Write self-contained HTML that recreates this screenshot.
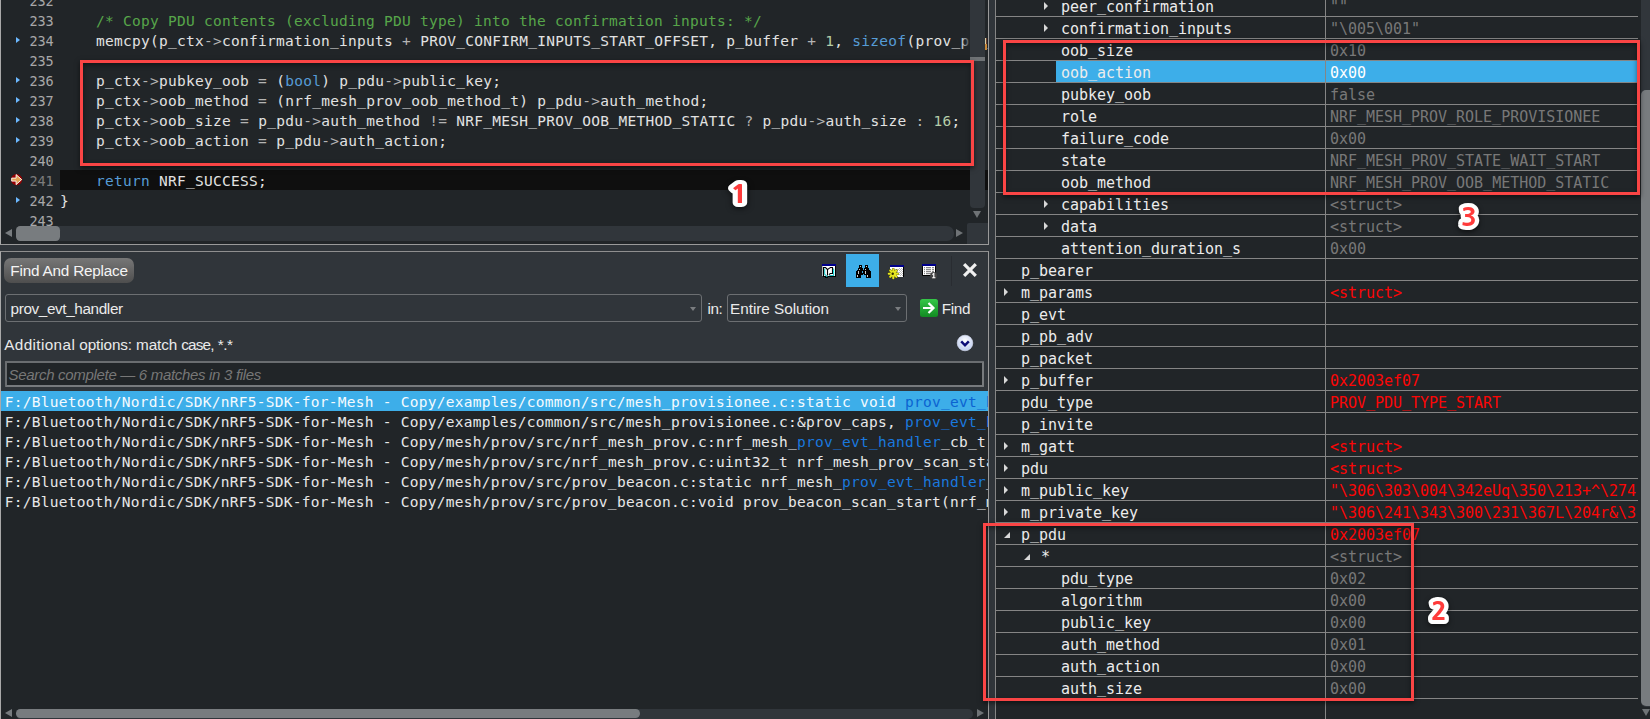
<!DOCTYPE html><html><head><meta charset="utf-8"><title>Find And Replace</title><style>
*{box-sizing:border-box;margin:0;padding:0}
html,body{width:1650px;height:719px;overflow:hidden;background:#30353a;}
body{position:relative;font-family:"Liberation Sans","DejaVu Sans",sans-serif;color:#e6e6e6;}
.abs{position:absolute}
.mono{font-family:"DejaVu Sans Mono","Liberation Mono",monospace;font-size:14.5px;letter-spacing:0.271px;white-space:pre}
#ed{left:0;top:0;width:989px;height:245px;background:#212528;border-left:1px solid #a9a9a9;border-right:1px solid #9a9a9a;border-bottom:1px solid #9a9a9a;overflow:hidden}
.ln{position:absolute;left:0;height:20px;line-height:20px;width:970px}
.ln .no{position:absolute;left:28.4px;top:1px;color:#a8a8a8;font-size:13.5px;letter-spacing:-0.13px}
.ln .cd{position:absolute;left:59px;top:1px;color:#e2e2e2}
u{text-decoration:none;position:relative;top:-1px} .cm{color:#57a64a} .kw{color:#569cd6} .nu{color:#b5cea8} .op{color:#b4b4b4}
.tri{position:absolute;left:14.6px;top:6.8px;width:0;height:0;border-left:4px solid #6cb8ff;border-top:3.1px solid transparent;border-bottom:3.1px solid transparent}
.box{position:absolute;border:3px solid #fa4545;box-shadow:0 2px 5px rgba(0,0,0,.55), inset 0 2px 5px rgba(0,0,0,.45);pointer-events:none}
#fp{left:0;top:251px;width:989px;height:468px;background:#30353a;border-left:1px solid #a9a9a9;border-top:1px solid #8f8f8f;border-right:1px solid #9a9a9a;overflow:hidden}
.ui{font-size:15px;color:#eaeaea;white-space:pre}
.res{position:absolute;left:0;width:987px;height:20px;line-height:22px;color:#e8e8e8;padding-left:3.8px;overflow:hidden}
.hl{color:#1a78de} .hs{color:#0b63d1}
#wt{left:995px;top:0;width:655px;height:719px;background:#212528;border-left:1px solid #858585;overflow:hidden}
.row{position:absolute;left:0;width:642px;height:22px;border-bottom:1px solid #858585;font-size:15px;letter-spacing:-0.03px}
.row .nm{position:absolute;top:1px;line-height:22px;color:#ececec}
.row .vl{position:absolute;left:334px;top:1px;line-height:22px;}
.ar{position:absolute;top:6.8px;width:0;height:0;border-left:4.7px solid #d8d8d8;border-top:4.4px solid transparent;border-bottom:4.4px solid transparent}
.ax{position:absolute;top:9px;width:0;height:0;border-bottom:6px solid #d8d8d8;border-left:6px solid transparent}
</style></head><body>
<div id="ed" class="abs">
<div class="abs" style="left:59px;top:170px;width:929px;height:20px;background:#0f0f0f"></div>
<div class="ln mono" style="top:-10px"><span class="no">232</span><span class="cd"></span></div>
<div class="ln mono" style="top:10px"><span class="no">233</span><span class="cd">    <span class="cm">/* Copy PDU contents (excluding PDU type) into the confirmation inputs: */</span></span></div>
<div class="ln mono" style="top:30px"><i class="tri"></i><span class="no">234</span><span class="cd">    memcpy(p<u>_</u>ctx<span class="op">-&gt;</span>confirmation<u>_</u>inputs <span class="op">+</span> PROV<u>_</u>CONFIRM<u>_</u>INPUTS<u>_</u>START<u>_</u>OFFSET, p<u>_</u>buffer <span class="op">+</span> <span class="nu">1</span>, <span class="kw">sizeof</span>(prov<u>_</u>pdu<u>_</u>prov<u>_</u>start<u>_</u>t) <span class="op">-</span> <span class="nu">1</span>);</span></div>
<div class="ln mono" style="top:50px"><span class="no">235</span><span class="cd"></span></div>
<div class="ln mono" style="top:70px"><i class="tri"></i><span class="no">236</span><span class="cd">    p<u>_</u>ctx<span class="op">-&gt;</span>pubkey<u>_</u>oob <span class="op">=</span> (<span class="kw">bool</span>) p<u>_</u>pdu<span class="op">-&gt;</span>public<u>_</u>key;</span></div>
<div class="ln mono" style="top:90px"><i class="tri"></i><span class="no">237</span><span class="cd">    p<u>_</u>ctx<span class="op">-&gt;</span>oob<u>_</u>method <span class="op">=</span> (nrf<u>_</u>mesh<u>_</u>prov<u>_</u>oob<u>_</u>method<u>_</u>t) p<u>_</u>pdu<span class="op">-&gt;</span>auth<u>_</u>method;</span></div>
<div class="ln mono" style="top:110px"><i class="tri"></i><span class="no">238</span><span class="cd">    p<u>_</u>ctx<span class="op">-&gt;</span>oob<u>_</u>size <span class="op">=</span> p<u>_</u>pdu<span class="op">-&gt;</span>auth<u>_</u>method <span class="op">!=</span> NRF<u>_</u>MESH<u>_</u>PROV<u>_</u>OOB<u>_</u>METHOD<u>_</u>STATIC <span class="op">?</span> p<u>_</u>pdu<span class="op">-&gt;</span>auth<u>_</u>size <span class="op">:</span> <span class="nu">16</span>;</span></div>
<div class="ln mono" style="top:130px"><i class="tri"></i><span class="no">239</span><span class="cd">    p<u>_</u>ctx<span class="op">-&gt;</span>oob<u>_</u>action <span class="op">=</span> p<u>_</u>pdu<span class="op">-&gt;</span>auth<u>_</u>action;</span></div>
<div class="ln mono" style="top:150px"><span class="no">240</span><span class="cd"></span></div>
<div class="ln mono" style="top:170px"><span class="no" style="color:#7c7c7c">241</span><span class="cd">    <span class="kw">return</span> NRF<u>_</u>SUCCESS;</span></div>
<div class="ln mono" style="top:190px"><i class="tri"></i><span class="no">242</span><span class="cd">}</span></div>
<div class="ln mono" style="top:210px"><span class="no">243</span><span class="cd"></span></div>
<svg class="abs" style="left:8px;top:172px" width="15" height="15" viewBox="0 0 15 15"><circle cx="7.6" cy="7.6" r="5.6" fill="#960000"/><path d="M2.7 6.1h4.4V2.6l5.6 5-5.6 5V9.1H2.7z" fill="#e2a253" stroke="#fff" stroke-width="0.9" stroke-linejoin="miter"/></svg>
<div class="abs" style="left:960px;top:30px;width:10px;height:20px;background:linear-gradient(90deg,rgba(33,37,40,0),#212528)"></div>
<div class="abs" style="left:969px;top:0;width:15px;height:208px;background:#31363b;border-radius:0 0 4px 4px"></div>
<div class="abs" style="left:969px;top:57px;width:15px;height:4px;background:#6f7376"></div>
<div class="abs" style="left:972px;top:211px;width:0;height:0;border-top:7px solid #6f7376;border-left:4.5px solid transparent;border-right:4.5px solid transparent"></div>
<div class="abs" style="left:15px;top:226px;width:938px;height:15px;background:#31363b;border-radius:5px 7px 7px 5px"></div>
<div class="abs" style="left:15px;top:226px;width:44px;height:15px;background:#787c7f;border-radius:4.2px"></div>
<div class="abs" style="left:4.3px;top:228.7px;width:0;height:0;border-right:7px solid #787c7f;border-top:4.5px solid transparent;border-bottom:4.5px solid transparent"></div>
<div class="abs" style="left:955px;top:228.7px;width:0;height:0;border-left:7px solid #6f7376;border-top:4.5px solid transparent;border-bottom:4.5px solid transparent"></div>
<div class="abs" style="left:966px;top:223px;width:22px;height:21px;background:#31363b;border-radius:2px 0 0 0"></div>
<div class="abs" style="left:984px;top:44px;width:2px;height:6px;background:#c98a3a"></div>
</div>
<div class="box" style="left:80px;top:60px;width:894px;height:106px"></div>
<div id="fp" class="abs">
<div class="abs ui" style="left:3px;top:6px;width:130px;height:25px;line-height:25px;border-radius:7px;background:linear-gradient(#777,#4e4e4e);padding-left:6.3px;font-size:15.3px;letter-spacing:-0.2px;color:#f4f4f4">Find And Replace</div>
<div class="abs" style="left:845px;top:2px;width:33px;height:33px;background:#3daee9"></div>
<div class="abs" style="left:950px;top:4px;width:1px;height:30px;background:#292c31"></div>
<svg class="abs" style="left:821px;top:12px" width="15" height="15" viewBox="0 0 15 15"><rect x="0" y="0" width="14" height="2" fill="#00008b"/><rect x="0" y="2" width="13" height="10" fill="#fff"/><rect x="0" y="2" width="1" height="10" fill="#c4c4c4"/><rect x="13" y="2" width="1" height="11" fill="#000"/><rect x="1" y="12" width="13" height="1" fill="#000"/><rect x="3" y="13" width="3" height="1" fill="#000"/><path d="M1.5 12V3.5h2l2 2v6" fill="none" stroke="#000" stroke-width="1.1"/><path d="M2.7 4.6v5.6l2.6 2.6" fill="none" stroke="#1fc4c4" stroke-width="1.1"/><path d="M5.5 5.6l1.6-1.2 1.4-0.9h2v6H8.3l-1.4 1.1" fill="none" stroke="#000" stroke-width="1.1"/><path d="M11.6 4.6v6.9H7.2" fill="none" stroke="#1fc4c4" stroke-width="1.1"/><circle cx="11.7" cy="6.6" r="0.6" fill="#0ff"/><circle cx="11.7" cy="8.6" r="0.6" fill="#0ff"/></svg>
<svg class="abs" style="left:855px;top:13px" width="15" height="13" viewBox="0 0 15 13"><rect x="3" y="0" width="3" height="1.05" fill="#000"/><rect x="9" y="0" width="3" height="1.05" fill="#000"/><rect x="3" y="1" width="3" height="1.05" fill="#000"/><rect x="9" y="1" width="3" height="1.05" fill="#000"/><rect x="3" y="2" width="3" height="1.05" fill="#000"/><rect x="9" y="2" width="3" height="1.05" fill="#000"/><rect x="2" y="3" width="5" height="1.05" fill="#000"/><rect x="8" y="3" width="5" height="1.05" fill="#000"/><rect x="2" y="4" width="5" height="1.05" fill="#000"/><rect x="8" y="4" width="5" height="1.05" fill="#000"/><rect x="1" y="5" width="13" height="1.05" fill="#000"/><rect x="0" y="6" width="6" height="1.05" fill="#000"/><rect x="7" y="6" width="8" height="1.05" fill="#000"/><rect x="0" y="7" width="6" height="1.05" fill="#000"/><rect x="7" y="7" width="8" height="1.05" fill="#000"/><rect x="0" y="8" width="15" height="1.05" fill="#000"/><rect x="0" y="9" width="7" height="1.05" fill="#000"/><rect x="8" y="9" width="7" height="1.05" fill="#000"/><rect x="0" y="10" width="5" height="1.05" fill="#000"/><rect x="10" y="10" width="5" height="1.05" fill="#000"/><rect x="0" y="11" width="5" height="1.05" fill="#000"/><rect x="10" y="11" width="5" height="1.05" fill="#000"/><rect x="0" y="12" width="5" height="1.05" fill="#000"/><rect x="10" y="12" width="5" height="1.05" fill="#000"/><rect x="4.15" y="1" width="0.8" height="1" fill="#fff"/><rect x="10.15" y="1" width="0.8" height="1" fill="#fff"/><rect x="3.15" y="4" width="0.8" height="1" fill="#fff"/><rect x="9.15" y="4" width="0.8" height="1" fill="#fff"/><rect x="2.15" y="6" width="0.8" height="1" fill="#fff"/><rect x="2.15" y="7" width="0.8" height="1" fill="#fff"/><rect x="2.15" y="8" width="0.8" height="1" fill="#fff"/><rect x="9.15" y="6" width="0.8" height="1" fill="#fff"/><rect x="9.15" y="7" width="0.8" height="1" fill="#fff"/><rect x="9.15" y="8" width="0.8" height="1" fill="#fff"/><rect x="1.15" y="10" width="0.8" height="1" fill="#fff"/><rect x="1.15" y="11" width="0.8" height="1" fill="#fff"/><rect x="11.15" y="10" width="0.8" height="1" fill="#fff"/><rect x="11.15" y="11" width="0.8" height="1" fill="#fff"/></svg>
<svg class="abs" style="left:886px;top:13px" width="18" height="15" viewBox="0 0 18 15"><rect x="3" y="0" width="14" height="2" fill="#00008b"/><rect x="3" y="2" width="13" height="10" fill="#fff"/><rect x="16" y="2" width="1" height="10" fill="#000"/><g fill="#bdbdbd"><rect x="12" y="3" width="1" height="1"/><rect x="14" y="3" width="1" height="1"/><rect x="11" y="4" width="1" height="1"/><rect x="13" y="4" width="1" height="1"/><rect x="15" y="4" width="1" height="1"/><rect x="12" y="5" width="1" height="1"/><rect x="14" y="5" width="1" height="1"/><rect x="13" y="6" width="1" height="1"/><rect x="15" y="6" width="1" height="1"/><rect x="12" y="7" width="1" height="1"/><rect x="14" y="7" width="1" height="1"/><rect x="13" y="8" width="1" height="1"/><rect x="15" y="8" width="1" height="1"/><rect x="12" y="9" width="1" height="1"/><rect x="14" y="9" width="1" height="1"/><rect x="13" y="10" width="1" height="1"/><rect x="15" y="10" width="1" height="1"/></g><g stroke="#3a3a00" stroke-width="2.6" stroke-linecap="round"><path d="M6.3 4.2v9M1.8 8.7h9M3.1 5.5l6.4 6.4M9.5 5.5L3.1 11.9"/></g><g stroke="#e6e620" stroke-width="2.1" stroke-linecap="round"><path d="M6.3 4.4v8.8M1.8 8.7h9M3.2 5.6l6.2 6.2M9.4 5.6L3.2 11.8"/></g><circle cx="5.7" cy="8.7" r="1.2" fill="#2a2a00"/></svg>
<svg class="abs" style="left:921px;top:12px" width="17" height="16" viewBox="0 0 17 16"><rect x="0" y="0" width="14" height="2" fill="#00008b"/><rect x="0" y="2" width="14" height="10" rx="1" fill="#000"/><rect x="1" y="2" width="12" height="9" fill="#fff"/><g fill="#6e6e6e"><rect x="2" y="3.2" width="1" height="1"/><rect x="4" y="3.2" width="5" height="1"/><rect x="10" y="3.2" width="2" height="1"/><rect x="2" y="5.2" width="1" height="1"/><rect x="4" y="5.2" width="5" height="1"/><rect x="10" y="5.2" width="2" height="1"/><rect x="2" y="7.2" width="1" height="1"/><rect x="4" y="7.2" width="5" height="1"/><rect x="10" y="7.2" width="2" height="1"/><rect x="2" y="9.2" width="1" height="1"/><rect x="4" y="9.2" width="5" height="1"/></g><circle cx="11.6" cy="11.4" r="3.4" fill="#454545"/><path d="M10.2 10l1.6-1.3h0.6v4.6h1v0.9h-3.2v-0.9h1V10.4l-1 0.6z" fill="#fff"/></svg>
<svg class="abs" style="left:960px;top:10px" width="16" height="16" viewBox="0 0 16 16"><path d="M3.1 2.1l11.7 11.7M14.8 2.1L3.1 13.8" stroke="#f0f0f0" stroke-width="3.2" stroke-linecap="butt"/></svg>
<div class="abs ui" style="left:4px;top:42px;width:697px;height:28px;line-height:28px;border:1px solid #6c6f72;border-radius:3px;padding-left:4.6px;font-size:15.3px;letter-spacing:-0.38px">prov_evt_handler</div>
<div class="abs" style="left:688.5px;top:55px;width:0;height:0;border-top:4px solid #7a7d80;border-left:3.5px solid transparent;border-right:3.5px solid transparent"></div>
<div class="abs ui" style="left:706.5px;top:43px;height:29px;line-height:28px;font-size:15.3px;letter-spacing:-0.5px">in:</div>
<div class="abs ui" style="left:726px;top:42px;width:180px;height:28px;line-height:28px;border:1px solid #6c6f72;border-radius:3px;padding-left:2.1px;font-size:15.3px;letter-spacing:-0.04px">Entire Solution</div>
<div class="abs" style="left:894px;top:55px;width:0;height:0;border-top:4px solid #7a7d80;border-left:3.5px solid transparent;border-right:3.5px solid transparent"></div>
<svg class="abs" style="left:918px;top:46px" width="20" height="20" viewBox="0 0 20 20"><defs><linearGradient id="gg" x1="0" y1="0" x2="0" y2="1"><stop offset="0" stop-color="#35c848"/><stop offset="1" stop-color="#128a22"/></linearGradient></defs><rect x="1" y="1" width="18" height="18" rx="2.5" fill="url(#gg)"/><path d="M4 10h10M9.5 5l5 5-5 5" fill="none" stroke="#fff" stroke-width="2.2"/></svg>
<div class="abs ui" style="left:940.8px;top:43px;height:29px;line-height:28px;font-size:15.3px;letter-spacing:-0.35px">Find</div>
<div class="abs ui" style="left:3.2px;top:82px;height:22px;line-height:22px;font-size:15.3px;letter-spacing:-0.12px"><span style="letter-spacing:0.38px">Additional</span> options: match <span style="letter-spacing:-0.85px">case,</span> <span style="letter-spacing:-0.4px">*.*</span></div>
<svg class="abs" style="left:955px;top:82px" width="18" height="18" viewBox="0 0 18 18"><defs><radialGradient id="cg" cx="0.5" cy="0.35" r="0.7"><stop offset="0" stop-color="#ffffff"/><stop offset="1" stop-color="#b9c8ee"/></radialGradient></defs><circle cx="9" cy="9" r="7.8" fill="url(#cg)" stroke="#dfe6f8" stroke-width="0.6"/><path d="M5.2 7.4L9 11.3l3.8-3.9" fill="none" stroke="#0c0c78" stroke-width="2.5"/></svg>
<div class="abs ui" style="left:4px;top:109px;width:979px;height:26px;line-height:23px;border:2px solid #6a6d70;border-bottom-color:#777a7d;border-right-color:#777a7d;border-radius:1px;background:#212528;padding-left:1.5px;font-style:italic;font-size:15px;letter-spacing:-0.31px;color:#777">Search complete — 6 matches in 3 files</div>
<div class="abs" style="left:0;top:139px;width:987px;height:329px;background:#212528"></div>
<div class="res mono" style="top:139px;background:#3daee9;color:#f4fbff;">F:/Bluetooth/Nordic/SDK/nRF5-SDK-for-Mesh - Copy/examples/common/src/mesh<u>_</u>provisionee.c:static void <span class="hs">prov<u>_</u>evt<u>_</u>handler</span>(const nrf<u>_</u>mesh<u>_</u>prov<u>_</u>evt<u>_</u>t * p<u>_</u>evt)</div>
<div class="res mono" style="top:159px;">F:/Bluetooth/Nordic/SDK/nRF5-SDK-for-Mesh - Copy/examples/common/src/mesh<u>_</u>provisionee.c:&amp;prov<u>_</u>caps, <span class="hl">prov<u>_</u>evt<u>_</u>handler</span>));</div>
<div class="res mono" style="top:179px;">F:/Bluetooth/Nordic/SDK/nRF5-SDK-for-Mesh - Copy/mesh/prov/src/nrf<u>_</u>mesh<u>_</u>prov.c:nrf<u>_</u>mesh<u>_</u><span class="hl">prov<u>_</u>evt<u>_</u>handler</span><u>_</u>cb<u>_</u>t event<u>_</u>handler)</div>
<div class="res mono" style="top:199px;">F:/Bluetooth/Nordic/SDK/nRF5-SDK-for-Mesh - Copy/mesh/prov/src/nrf<u>_</u>mesh<u>_</u>prov.c:uint32<u>_</u>t nrf<u>_</u>mesh<u>_</u>prov<u>_</u>scan<u>_</u>start(nrf<u>_</u>mesh<u>_</u><span class="hl">prov<u>_</u>evt<u>_</u>handler</span><u>_</u>cb<u>_</u>t event<u>_</u>handler)</div>
<div class="res mono" style="top:219px;">F:/Bluetooth/Nordic/SDK/nRF5-SDK-for-Mesh - Copy/mesh/prov/src/prov<u>_</u>beacon.c:static nrf<u>_</u>mesh<u>_</u><span class="hl">prov<u>_</u>evt<u>_</u>handler</span><u>_</u>cb<u>_</u>t m<u>_</u>event<u>_</u>handler;</div>
<div class="res mono" style="top:239px;">F:/Bluetooth/Nordic/SDK/nRF5-SDK-for-Mesh - Copy/mesh/prov/src/prov<u>_</u>beacon.c:void prov<u>_</u>beacon<u>_</u>scan<u>_</u>start(nrf<u>_</u>mesh<u>_</u><span class="hl">prov<u>_</u>evt<u>_</u>handler</span><u>_</u>cb<u>_</u>t event<u>_</u>handler)</div>
<div class="abs" style="left:15px;top:457px;width:957px;height:10px;background:#31363b;border-radius:5px 6px 6px 5px"></div>
<div class="abs" style="left:15px;top:457px;width:624px;height:8.7px;background:#787c7f;border-radius:4.4px"></div>
<div class="abs" style="left:4.3px;top:456.5px;width:0;height:0;border-right:7px solid #787c7f;border-top:4.5px solid transparent;border-bottom:4.5px solid transparent"></div>
<div class="abs" style="left:976px;top:456.5px;width:0;height:0;border-left:7px solid #6f7376;border-top:4.5px solid transparent;border-bottom:4.5px solid transparent"></div>
</div>
<div id="wt" class="abs">
<div class="row mono" style="top:-5px"><i class="ar" style="left:48px"></i><span class="nm" style="left:65px">peer<u>_</u>confirmation</span><span class="vl" style="color:#787878">&quot;&quot;</span></div>
<div class="row mono" style="top:17px"><i class="ar" style="left:48px"></i><span class="nm" style="left:65px">confirmation<u>_</u>inputs</span><span class="vl" style="color:#787878">&quot;\005\001&quot;</span></div>
<div class="row mono" style="top:39px"><span class="nm" style="left:65px">oob<u>_</u>size</span><span class="vl" style="color:#787878">0x10</span></div>
<div class="row mono" style="top:61px"><div class="abs" style="left:60px;top:0;width:583px;height:21px;background:#3daee9"></div><span class="nm" style="left:65px">oob<u>_</u>action</span><span class="vl" style="color:#ffffff">0x00</span></div>
<div class="row mono" style="top:83px"><span class="nm" style="left:65px">pubkey<u>_</u>oob</span><span class="vl" style="color:#787878">false</span></div>
<div class="row mono" style="top:105px"><span class="nm" style="left:65px">role</span><span class="vl" style="color:#787878">NRF<u>_</u>MESH<u>_</u>PROV<u>_</u>ROLE<u>_</u>PROVISIONEE</span></div>
<div class="row mono" style="top:127px"><span class="nm" style="left:65px">failure<u>_</u>code</span><span class="vl" style="color:#787878">0x00</span></div>
<div class="row mono" style="top:149px"><span class="nm" style="left:65px">state</span><span class="vl" style="color:#787878">NRF<u>_</u>MESH<u>_</u>PROV<u>_</u>STATE<u>_</u>WAIT<u>_</u>START</span></div>
<div class="row mono" style="top:171px"><span class="nm" style="left:65px">oob<u>_</u>method</span><span class="vl" style="color:#787878">NRF<u>_</u>MESH<u>_</u>PROV<u>_</u>OOB<u>_</u>METHOD<u>_</u>STATIC</span></div>
<div class="row mono" style="top:193px"><i class="ar" style="left:48px"></i><span class="nm" style="left:65px">capabilities</span><span class="vl" style="color:#787878">&lt;struct&gt;</span></div>
<div class="row mono" style="top:215px"><i class="ar" style="left:48px"></i><span class="nm" style="left:65px">data</span><span class="vl" style="color:#787878">&lt;struct&gt;</span></div>
<div class="row mono" style="top:237px"><span class="nm" style="left:65px">attention<u>_</u>duration<u>_</u>s</span><span class="vl" style="color:#787878">0x00</span></div>
<div class="row mono" style="top:259px"><span class="nm" style="left:25px">p<u>_</u>bearer</span><span class="vl" style="color:#787878"></span></div>
<div class="row mono" style="top:281px"><i class="ar" style="left:8px"></i><span class="nm" style="left:25px">m<u>_</u>params</span><span class="vl" style="color:#fc0606">&lt;struct&gt;</span></div>
<div class="row mono" style="top:303px"><span class="nm" style="left:25px">p<u>_</u>evt</span><span class="vl" style="color:#787878"></span></div>
<div class="row mono" style="top:325px"><span class="nm" style="left:25px">p<u>_</u>pb<u>_</u>adv</span><span class="vl" style="color:#787878"></span></div>
<div class="row mono" style="top:347px"><span class="nm" style="left:25px">p<u>_</u>packet</span><span class="vl" style="color:#787878"></span></div>
<div class="row mono" style="top:369px"><i class="ar" style="left:8px"></i><span class="nm" style="left:25px">p<u>_</u>buffer</span><span class="vl" style="color:#fc0606">0x2003ef07</span></div>
<div class="row mono" style="top:391px"><span class="nm" style="left:25px">pdu<u>_</u>type</span><span class="vl" style="color:#fc0606">PROV<u>_</u>PDU<u>_</u>TYPE<u>_</u>START</span></div>
<div class="row mono" style="top:413px"><span class="nm" style="left:25px">p<u>_</u>invite</span><span class="vl" style="color:#787878"></span></div>
<div class="row mono" style="top:435px"><i class="ar" style="left:8px"></i><span class="nm" style="left:25px">m<u>_</u>gatt</span><span class="vl" style="color:#fc0606">&lt;struct&gt;</span></div>
<div class="row mono" style="top:457px"><i class="ar" style="left:8px"></i><span class="nm" style="left:25px">pdu</span><span class="vl" style="color:#fc0606">&lt;struct&gt;</span></div>
<div class="row mono" style="top:479px"><i class="ar" style="left:8px"></i><span class="nm" style="left:25px">m<u>_</u>public<u>_</u>key</span><span class="vl" style="color:#fc0606">&quot;\306\303\004\342eUq\350\213+^\274</span></div>
<div class="row mono" style="top:501px"><i class="ar" style="left:8px"></i><span class="nm" style="left:25px">m<u>_</u>private<u>_</u>key</span><span class="vl" style="color:#fc0606">&quot;\306\241\343\300\231\367L\204r&amp;\3</span></div>
<div class="row mono" style="top:523px"><i class="ax" style="left:8px"></i><span class="nm" style="left:25px">p<u>_</u>pdu</span><span class="vl" style="color:#fc0606">0x2003ef07</span></div>
<div class="row mono" style="top:545px"><i class="ax" style="left:28px"></i><span class="nm" style="left:45px">*</span><span class="vl" style="color:#787878">&lt;struct&gt;</span></div>
<div class="row mono" style="top:567px"><span class="nm" style="left:65px">pdu<u>_</u>type</span><span class="vl" style="color:#787878">0x02</span></div>
<div class="row mono" style="top:589px"><span class="nm" style="left:65px">algorithm</span><span class="vl" style="color:#787878">0x00</span></div>
<div class="row mono" style="top:611px"><span class="nm" style="left:65px">public<u>_</u>key</span><span class="vl" style="color:#787878">0x00</span></div>
<div class="row mono" style="top:633px"><span class="nm" style="left:65px">auth<u>_</u>method</span><span class="vl" style="color:#787878">0x01</span></div>
<div class="row mono" style="top:655px"><span class="nm" style="left:65px">auth<u>_</u>action</span><span class="vl" style="color:#787878">0x00</span></div>
<div class="row mono" style="top:677px"><span class="nm" style="left:65px">auth<u>_</u>size</span><span class="vl" style="color:#787878">0x00</span></div>
<div class="abs" style="left:329px;top:0;width:1px;height:719px;background:#858585"></div>
<div class="abs" style="left:645px;top:0;width:10px;height:707px;background:#31363b;border-radius:0 0 0 5px"></div>
<div class="abs" style="left:645px;top:90px;width:10px;height:616px;background:#787c7f;border-radius:5px 0 0 5px"></div>
<div class="abs" style="left:645.5px;top:709px;width:0;height:0;border-top:7px solid #6f7376;border-left:4.2px solid transparent;border-right:4.2px solid transparent"></div>
</div>
<div class="box" style="left:1003px;top:40px;width:637px;height:155px"></div>
<div class="box" style="left:983px;top:523px;width:431px;height:178px"></div>
<svg class="abs" style="left:717.6px;top:173.3px;overflow:visible" width="40" height="44"><g transform="translate(12 30) scale(1.25 1)" style="filter:drop-shadow(0 2px 2.5px rgba(0,0,0,.55))"><text x="0" y="0" font-family="NanumGothic, Liberation Sans, sans-serif" font-weight="800" font-size="24.5" fill="#ff3b3b" stroke="#fff" stroke-width="8.2" stroke-linejoin="round" paint-order="stroke">1</text></g></svg>
<svg class="abs" style="left:1448.8px;top:195.7px;overflow:visible" width="40" height="44"><g transform="translate(12 30) scale(1.06 1)" style="filter:drop-shadow(0 2px 2.5px rgba(0,0,0,.55))"><text x="0" y="0" font-family="NanumGothic, Liberation Sans, sans-serif" font-weight="800" font-size="24.5" fill="#ff3b3b" stroke="#fff" stroke-width="8.2" stroke-linejoin="round" paint-order="stroke">3</text></g></svg>
<svg class="abs" style="left:1418.8px;top:589.7px;overflow:visible" width="40" height="44"><g transform="translate(12 30) scale(1.06 1)" style="filter:drop-shadow(0 2px 2.5px rgba(0,0,0,.55))"><text x="0" y="0" font-family="NanumGothic, Liberation Sans, sans-serif" font-weight="800" font-size="24.5" fill="#ff3b3b" stroke="#fff" stroke-width="8.2" stroke-linejoin="round" paint-order="stroke">2</text></g></svg>
</body></html>
